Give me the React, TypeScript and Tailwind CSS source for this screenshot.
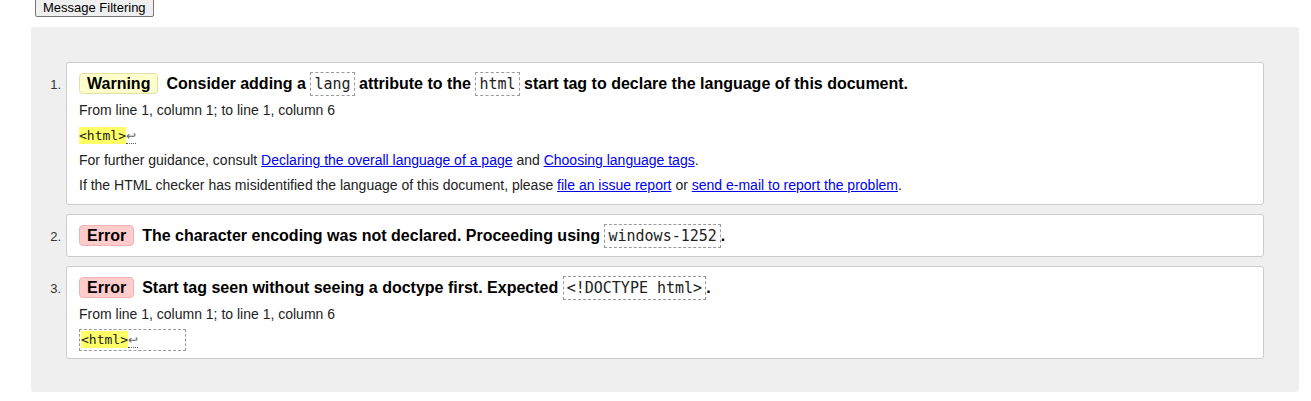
import React from "react";

const sans = { fontFamily: '"Liberation Sans", Arial, sans-serif' };

function Code({ children }: { children: React.ReactNode }) {
  return (
    <code className="border border-dashed border-[#999999] px-[3px] py-[2px] font-['DejaVu_Sans_Mono',monospace] text-[15px] font-normal leading-[18px] text-[#222]">
      {children}
    </code>
  );
}

function Badge({ kind }: { kind: "warning" | "error" }) {
  return kind === "warning" ? (
    <span className="mr-[8px] inline-block rounded-[4px] border border-[#e2e0a6] bg-[#ffffcc] px-[7px] py-[1px] leading-[17px]">
      Warning
    </span>
  ) : (
    <span className="mr-[8px] inline-block rounded-[4px] border border-[#efb3b3] bg-[#ffcccc] px-[7px] py-[1px] leading-[17px]">
      Error
    </span>
  );
}

function Extract({ boxed }: { boxed?: boolean }) {
  const inner = (
    <>
      <span className="bg-[#ffff66] py-[1px]">&lt;html&gt;</span>
      <span className="border-b border-dotted border-[#555] font-['Liberation_Sans',sans-serif] text-[12px] text-[#666]">
        ↩
      </span>
    </>
  );
  return (
    <p className="h-[25px] pt-[1px] leading-[25px]">
      {boxed ? (
        <code className="inline-block w-[107px] border border-dashed border-[#999999] px-[1px] font-['DejaVu_Sans_Mono',monospace] text-[13px] leading-[20px] text-[#222]">
          {inner}
        </code>
      ) : (
        <code className="font-['DejaVu_Sans_Mono',monospace] text-[13px] leading-[18px] text-[#222]">
          {inner}
        </code>
      )}
    </p>
  );
}

function Link({ children }: { children: React.ReactNode }) {
  return <a className="text-[#0000ee] underline">{children}</a>;
}

function Row({ n, children }: { n: number; children: React.ReactNode }) {
  return (
    <div className="flex items-baseline">
      <span className="w-[35px] shrink-0 pr-[5px] text-right text-[13px] text-[#333]">{n}.</span>
      <div className="flex-1 rounded-[3px] border border-[#cccccc] bg-white px-3 py-[7px] text-[14px] text-[#222]">
        {children}
      </div>
    </div>
  );
}

export default function App() {
  return (
    <div className="min-h-[401px] w-[1311px] bg-white" style={sans}>
      <div className="-mt-[4px] flex h-[21px] pl-[35px]">
        <button className="h-[21px] rounded-[2px] border border-[#767676] bg-[#efefef] px-[7px] pt-[1px] text-[13px] leading-[17px] text-black">
          Message Filtering
        </button>
      </div>
      <div className="ml-[31px] mt-[10px] w-[1268px] rounded-[3px] bg-[#efefef] pb-[33px] pr-[35px] pt-[35px]">
        <div className="flex flex-col gap-[9px]">
          <Row n={1}>
            <p className="h-[27px] text-[16px] font-bold leading-[27px] text-black">
              <Badge kind="warning" />
              Consider adding a <Code>lang</Code> attribute to the <Code>html</Code> start tag to declare the language of this document.
            </p>
            <p className="h-[25px] pt-[1px] leading-[25px]">From line 1, column 1; to line 1, column 6</p>
            <Extract />
            <p className="h-[25px] pt-[1px] leading-[25px]">
              For further guidance, consult <Link>Declaring the overall language of a page</Link> and{" "}
              <Link>Choosing language tags</Link>.
            </p>
            <p className="h-[25px] pt-[1px] leading-[25px]">
              If the HTML checker has misidentified the language of this document, please{" "}
              <Link>file an issue report</Link> or <Link>send e-mail to report the problem</Link>.
            </p>
          </Row>
          <Row n={2}>
            <p className="h-[27px] text-[16px] font-bold leading-[27px] text-black">
              <Badge kind="error" />
              The character encoding was not declared. Proceeding using <Code>windows-1252</Code>.
            </p>
          </Row>
          <Row n={3}>
            <p className="h-[27px] text-[16px] font-bold leading-[27px] text-black">
              <Badge kind="error" />
              Start tag seen without seeing a doctype first. Expected <Code>&lt;!DOCTYPE html&gt;</Code>.
            </p>
            <p className="h-[25px] pt-[1px] leading-[25px]">From line 1, column 1; to line 1, column 6</p>
            <Extract boxed />
          </Row>
        </div>
      </div>
    </div>
  );
}
